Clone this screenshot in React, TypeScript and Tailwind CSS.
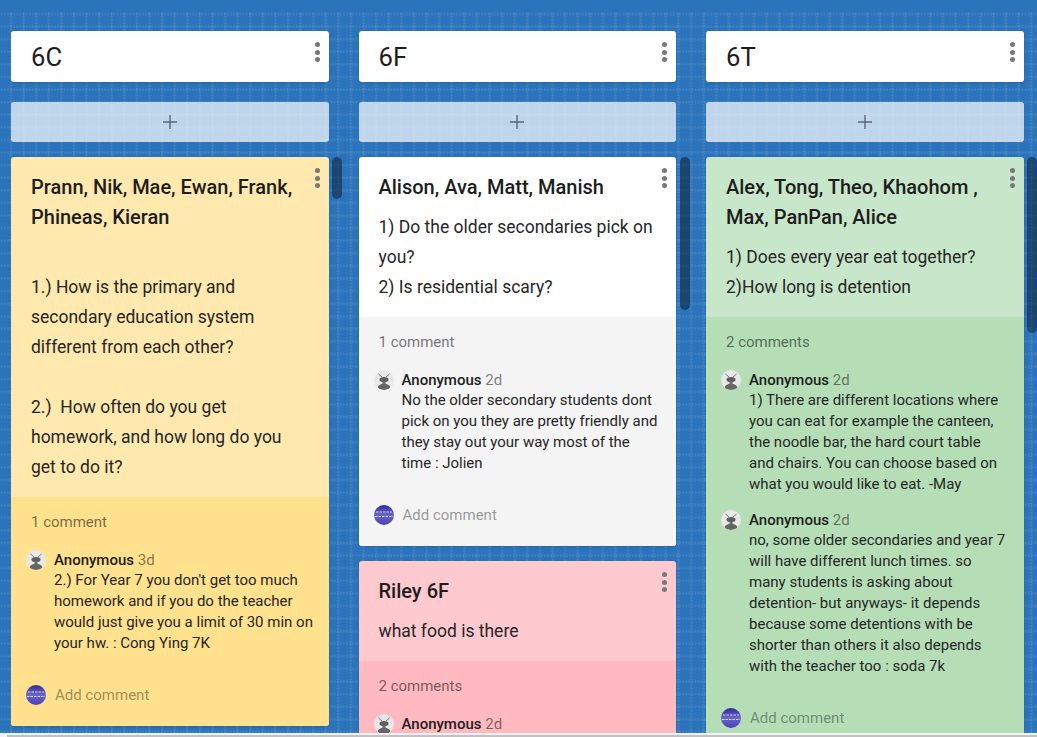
import React from "react";

type Comment = { when: string; text: string[] };
type Post = {
  title: string[];
  body: string[];
  bg: string;
  foot: string;
  count: string;
  comments: Comment[];
  addComment?: boolean;
};

const Dots = () => (
  <div className="absolute top-[11px] right-[9px] flex flex-col gap-[2.5px]">
    <span className="w-[5px] h-[5px] rounded-full bg-[#787878]" />
    <span className="w-[5px] h-[5px] rounded-full bg-[#787878]" />
    <span className="w-[5px] h-[5px] rounded-full bg-[#787878]" />
  </div>
);

const AntAvatar = () => (
  <svg width="20" height="20" viewBox="0 0 20 20" className="shrink-0">
    <defs>
      <clipPath id="antClip">
        <circle cx="10" cy="10" r="10" />
      </clipPath>
    </defs>
    <circle cx="10" cy="10" r="10" fill="#e8e8e8" />
    <g clipPath="url(#antClip)">
      <path d="M4.5 4 8 7M15.5 4 12 7" stroke="#777" strokeWidth="1" fill="none" />
      <ellipse cx="10" cy="9.5" rx="4.5" ry="2.6" fill="#5e5e5e" />
      <rect x="8.5" y="11" width="3" height="3" fill="#6a6a6a" />
      <ellipse cx="10" cy="18" rx="6.5" ry="4.2" fill="#666" />
    </g>
  </svg>
);

const BlueAvatar = () => (
  <svg width="20" height="20" viewBox="0 0 20 20" className="shrink-0">
    <defs>
      <linearGradient id="blueFill" x1="0" y1="0" x2="0" y2="1">
        <stop offset="0" stopColor="#2f2b93" />
        <stop offset="0.5" stopColor="#6a66c6" />
        <stop offset="1" stopColor="#4a3eb8" />
      </linearGradient>
    </defs>
    <circle cx="10" cy="10" r="10" fill="url(#blueFill)" />
    <path d="M2 7H18M1 11.5H19" stroke="#cfd0ee" strokeWidth="1.2" strokeDasharray="2.5 1" fill="none" />
  </svg>
);

const PostCard = ({ post }: { post: Post }) => (
  <div className={`relative rounded-[3px] overflow-hidden shadow-sm ${post.bg}`}>
    <Dots />
    <div className="px-5 pt-[15px] pb-[15px]">
      <div className="text-[20px] leading-[30px] font-medium text-[#1d1d1d] mb-[10px]">
        {post.title.map((t) => (
          <div key={t}>{t}</div>
        ))}
      </div>
      <div className="text-[17.5px] leading-[30px] text-[#262626]">
        {post.body.map((t, i) => (
          <div key={i} className="whitespace-pre-wrap h-[30px]">
            {t}
          </div>
        ))}
      </div>
    </div>
    <div className={`pt-[15px] pb-[21px] ${post.foot}`}>
      <div className="px-5 text-[15px] leading-[20px] text-black/55">{post.count}</div>
      <div className="mt-[18px] flex flex-col gap-[15px]">
        {post.comments.map((c, i) => (
          <div key={i} className="flex pl-[15px] gap-[8px]">
            <AntAvatar />
            <div className="text-[15px] leading-[21px] text-[#262626] pr-[10px]">
              <div className="leading-[20px]">
                <span className="font-medium text-[#1d1d1d]">Anonymous</span>{" "}
                <span className="text-black/50">{c.when}</span>
              </div>
              {c.text.map((t) => (
                <div key={t} className="whitespace-nowrap">
                  {t}
                </div>
              ))}
            </div>
          </div>
        ))}
      </div>
      {post.addComment !== false && (
        <div className="mt-[31px] flex items-center pl-[15px] gap-[9px]">
          <BlueAvatar />
          <span className="text-[15px] leading-[20px] text-black/40">Add comment</span>
        </div>
      )}
    </div>
  </div>
);

const columns: { name: string; thumb: string; posts: Post[] }[] = [
  {
    name: "6C",
    thumb: "h-[42px]",
    posts: [
      {
        title: ["Prann, Nik, Mae, Ewan, Frank,", "Phineas, Kieran"],
        body: [
          "",
          "1.) How is the primary and",
          "secondary education system",
          "different from each other?",
          "",
          "2.)  How often do you get",
          "homework, and how long do you",
          "get to do it?",
        ],
        bg: "bg-[#ffe9ae]",
        foot: "bg-[#ffe18e]",
        count: "1 comment",
        comments: [
          {
            when: "3d",
            text: [
              "2.) For Year 7 you don't get too much",
              "homework and if you do the teacher",
              "would just give you a limit of 30 min on",
              "your hw. : Cong Ying 7K",
            ],
          },
        ],
      },
    ],
  },
  {
    name: "6F",
    thumb: "h-[153px]",
    posts: [
      {
        title: ["Alison, Ava, Matt, Manish"],
        body: ["1) Do the older secondaries pick on", "you?", "2) Is residential scary?"],
        bg: "bg-white",
        foot: "bg-[#f4f4f4]",
        count: "1 comment",
        comments: [
          {
            when: "2d",
            text: [
              "No the older secondary students dont",
              "pick on you they are pretty friendly and",
              "they stay out your way most of the",
              "time : Jolien",
            ],
          },
        ],
      },
      {
        title: ["Riley 6F"],
        body: ["what food is there"],
        bg: "bg-[#ffc9d0]",
        foot: "bg-[#ffb9c1]",
        count: "2 comments",
        comments: [{ when: "2d", text: [] }],
        addComment: false,
      },
    ],
  },
  {
    name: "6T",
    thumb: "h-[176px]",
    posts: [
      {
        title: ["Alex, Tong, Theo, Khaohom ,", "Max, PanPan, Alice"],
        body: ["1) Does every year eat together?", "2)How long is detention"],
        bg: "bg-[#c8e6c9]",
        foot: "bg-[#b5deb7]",
        count: "2 comments",
        comments: [
          {
            when: "2d",
            text: [
              "1) There are different locations where",
              "you can eat for example the canteen,",
              "the noodle bar, the hard court table",
              "and chairs. You can choose based on",
              "what you would like to eat. -May",
            ],
          },
          {
            when: "2d",
            text: [
              "no, some older secondaries and year 7",
              "will have different lunch times. so",
              "many students is asking about",
              "detention- but anyways- it depends",
              "because some detentions with be",
              "shorter than others it also depends",
              "with the teacher too : soda 7k",
            ],
          },
        ],
      },
    ],
  },
];

export default function App() {
  return (
    <div className="h-[737px] flex flex-col overflow-hidden bg-[#2b74bb] font-[Roboto,sans-serif]">
      <div className="flex-1 min-h-0 overflow-hidden mt-[12px] pt-[19px] pl-[11px] flex gap-[30px] bg-[radial-gradient(circle,rgba(255,255,255,0.09)_1px,transparent_1.4px),radial-gradient(circle,rgba(255,255,255,0.09)_1px,transparent_1.4px)] bg-size-[3.15px_12.6px,12.6px_3.15px] bg-position-[0px_-4.3px,4.7px_0px]">
        {columns.map((col) => (
          <div key={col.name} className="relative w-[317.5px] shrink-0">
            <div className="relative h-[51px] bg-white rounded-[3px] shadow-sm flex items-center px-5 pt-[1px] text-[25.6px] text-[#1d1d1d]">
              {col.name}
              <Dots />
            </div>
            <div className="mt-[20px] h-[40px] rounded-[3px] bg-white/70 flex items-center justify-center">
              <svg width="14" height="14" viewBox="0 0 14 14">
                <path d="M7 0V14M0 7H14" stroke="#5b6680" strokeWidth="1.4" />
              </svg>
            </div>
            <div className="mt-[15px] flex flex-col gap-[15px]">
              {col.posts.map((p) => (
                <PostCard key={p.title[0]} post={p} />
              ))}
            </div>
            <div className={`absolute top-[126px] left-[321px] w-[10px] rounded-full bg-black/40 ${col.thumb}`} />
          </div>
        ))}
      </div>
      <div className="h-[4px] bg-[#f1f1f1] pl-[7px] pt-[2px] shrink-0">
        <div className="h-[2px] bg-[#c1c1c1]" />
      </div>
    </div>
  );
}
